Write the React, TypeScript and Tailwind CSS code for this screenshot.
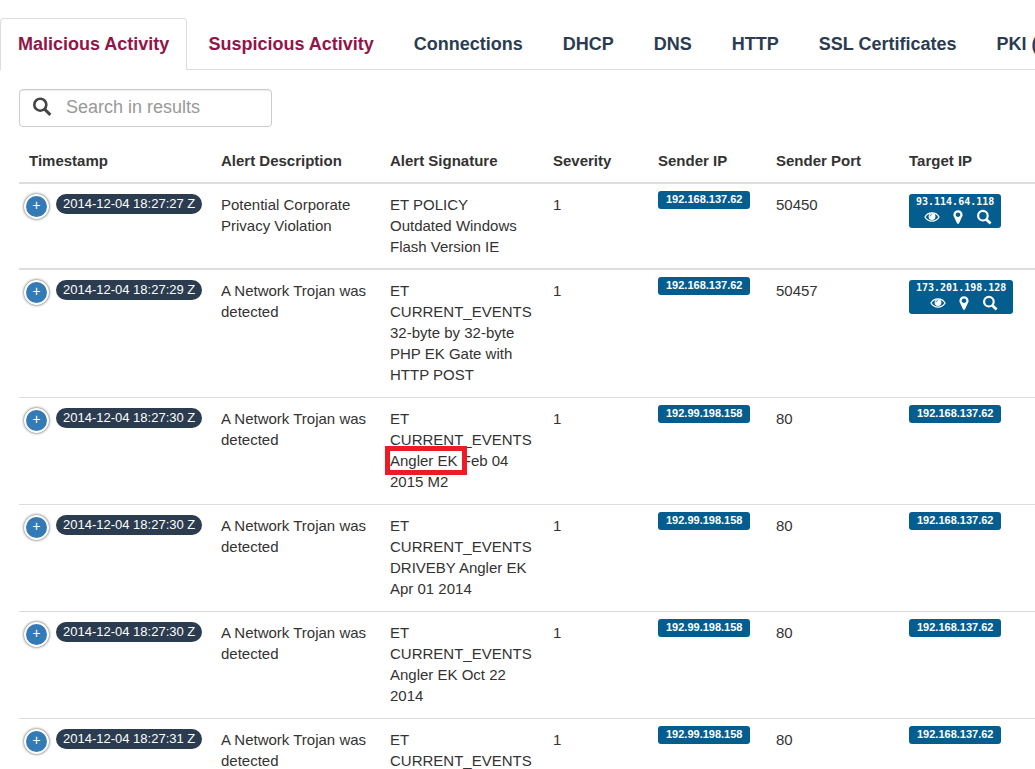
import React from "react";

type Alert = {
  time: string;
  description: string;
  signature: React.ReactNode;
  sender: string;
  port: string;
  target: string;
  external?: boolean;
};

const tabs = [
  { label: "Malicious Activity", alert: true, active: true },
  { label: "Suspicious Activity", alert: true },
  { label: "Connections" },
  { label: "DHCP" },
  { label: "DNS" },
  { label: "HTTP" },
  { label: "SSL Certificates" },
  { label: "PKI (" },
];

const alerts: Alert[] = [
  {
    time: "2014-12-04 18:27:27 Z",
    description: "Potential Corporate Privacy Violation",
    signature: "ET POLICY Outdated Windows Flash Version IE",
    sender: "192.168.137.62",
    port: "50450",
    target: "93.114.64.118",
    external: true,
  },
  {
    time: "2014-12-04 18:27:29 Z",
    description: "A Network Trojan was detected",
    signature: "ET CURRENT_EVENTS 32-byte by 32-byte PHP EK Gate with HTTP POST",
    sender: "192.168.137.62",
    port: "50457",
    target: "173.201.198.128",
    external: true,
  },
  {
    time: "2014-12-04 18:27:30 Z",
    description: "A Network Trojan was detected",
    signature: (
      <>
        ET CURRENT_EVENTS <Marked>Angler EK</Marked> Feb 04 2015 M2
      </>
    ),
    sender: "192.99.198.158",
    port: "80",
    target: "192.168.137.62",
  },
  {
    time: "2014-12-04 18:27:30 Z",
    description: "A Network Trojan was detected",
    signature: "ET CURRENT_EVENTS DRIVEBY Angler EK Apr 01 2014",
    sender: "192.99.198.158",
    port: "80",
    target: "192.168.137.62",
  },
  {
    time: "2014-12-04 18:27:30 Z",
    description: "A Network Trojan was detected",
    signature: "ET CURRENT_EVENTS Angler EK Oct 22 2014",
    sender: "192.99.198.158",
    port: "80",
    target: "192.168.137.62",
  },
  {
    time: "2014-12-04 18:27:31 Z",
    description: "A Network Trojan was detected",
    signature: "ET CURRENT_EVENTS",
    sender: "192.99.198.158",
    port: "80",
    target: "192.168.137.62",
  },
];

const headings = [
  "Timestamp",
  "Alert Description",
  "Alert Signature",
  "Severity",
  "Sender IP",
  "Sender Port",
  "Target IP",
];

function Marked({ children }: { children: React.ReactNode }) {
  return (
    <span className="relative whitespace-nowrap">
      {children}
      <span className="pointer-events-none absolute -inset-y-1.5 -left-[5px] -right-[9px] border-5 border-[#ed1c24]" />
    </span>
  );
}

function EyeIcon() {
  return (
    <svg viewBox="0 0 16 16" className="size-4 fill-none stroke-white" aria-hidden="true">
      <path
        d="M1 8C2.6 5.2 5 3.9 8 3.9S13.4 5.2 15 8C13.4 10.8 11 12.1 8 12.1S2.6 10.8 1 8Z"
        strokeWidth="1.3"
      />
      <circle cx="8" cy="7.6" r="3.4" className="fill-white stroke-none" />
      <path d="M5.9 7.4C6 6.3 6.7 5.7 7.7 5.6" className="stroke-[#045d8f]" strokeWidth="0.8" />
    </svg>
  );
}

function MarkerIcon() {
  return (
    <svg viewBox="0 0 1792 1792" className="size-4 fill-white" aria-hidden="true">
      <path d="M1152 640q0-106-75-181t-181-75-181 75-75 181 75 181 181 75 181-75 75-181zm256 0q0 109-33 179l-364 774q-16 33-47.5 52t-67.5 19-67.5-19-46.5-52l-365-774q-33-70-33-179 0-212 150-362t362-150 362 150 150 362z" />
    </svg>
  );
}

function MagnifierIcon() {
  return (
    <svg viewBox="0 0 16 16" className="size-4 fill-none stroke-white" aria-hidden="true">
      <circle cx="6.9" cy="6.7" r="4.8" strokeWidth="2.2" />
      <path d="M10.4 10.4 14.6 14.4" strokeWidth="2.8" />
    </svg>
  );
}

function IpLabel({ ip }: { ip: string }) {
  return (
    <span className="block h-[18px] w-fit rounded-[3px] bg-[#045d8f] px-2 text-[11px] leading-4 font-bold whitespace-nowrap text-white">
      {ip}
    </span>
  );
}

function ExternalIp({ ip }: { ip: string }) {
  return (
    <div className="flex w-fit flex-col items-center rounded-[3px] bg-[#045d8f] px-[7px] pb-[3px] text-white">
      <span className="font-['DejaVu_Sans_Mono',monospace] text-[10px] leading-[15px] font-bold whitespace-nowrap">
        {ip}
      </span>
      <div className="flex gap-2.5 pl-1.5">
        <button type="button" aria-label="Watch">
          <EyeIcon />
        </button>
        <button type="button" aria-label="Locate">
          <MarkerIcon />
        </button>
        <button type="button" aria-label="Search">
          <MagnifierIcon />
        </button>
      </div>
    </div>
  );
}

export default function App() {
  return (
    <div className="h-screen overflow-hidden bg-white pt-[18px] font-['Liberation_Sans',Arial,sans-serif] text-[15px] leading-[21px] text-[#333]">
      <nav className="flex h-[52px] gap-0.5 border-b border-[#ddd]">
        {tabs.map((t) => (
          <a
            key={t.label}
            href="#"
            className={
              "h-[52px] shrink-0 rounded-t border border-b-0 pt-3 text-lg leading-[26px] font-bold whitespace-nowrap " +
              (t.active ? "border-[#ddd] bg-white px-[17px] " : "border-transparent px-[18px] ") +
              (t.alert ? "text-[#8f1648]" : "text-[#2b3c50]")
            }
          >
            {t.label}
          </a>
        ))}
      </nav>

      <main className="pl-[19px]">
        <label className="mt-[19px] flex h-[38px] w-[253px] items-center rounded border border-[#ccc] pb-0.5 shadow-[inset_0_1px_1px_rgba(0,0,0,0.075)]">
          <svg
            viewBox="0 0 20 20"
            className="ml-3 size-5 shrink-0 fill-none stroke-[#444]"
            aria-hidden="true"
          >
            <circle cx="8.3" cy="7.7" r="6" strokeWidth="2.6" />
            <path d="M12.5 12.2 18.4 17.8" strokeWidth="3" />
          </svg>
          <input
            type="search"
            aria-label="Search in results"
            placeholder="Search in results"
            className="ml-3.5 min-w-0 flex-1 bg-transparent text-lg leading-6 outline-none placeholder:text-[#999]"
          />
        </label>

        <table className="mt-[13px] w-full table-fixed border-separate border-spacing-0 text-left">
          <colgroup>
            <col className="w-[192px]" />
            <col className="w-[169px]" />
            <col className="w-[163px]" />
            <col className="w-[105px]" />
            <col className="w-[118px]" />
            <col className="w-[133px]" />
            <col />
          </colgroup>
          <thead>
            <tr>
              {headings.map((h) => (
                <th
                  key={h}
                  scope="col"
                  className="h-[42px] px-2.5 pb-0.5 font-bold whitespace-nowrap"
                >
                  {h}
                </th>
              ))}
            </tr>
          </thead>
          <tbody className="[&_td]:border-t [&_td]:border-[#ddd] [&_td]:align-top [&>tr:nth-child(-n+2)>td]:border-t-2 [&_td]:pb-3 [&>tr:first-child>td]:pb-[11px]">
            {alerts.map((a, i) => (
              <tr key={i}>
                <td className="pt-2.5 pl-[5px]">
                  <div className="flex">
                    <button
                      type="button"
                      aria-label="Show details"
                      className="flex size-[25px] shrink-0 items-center justify-center rounded-full border-2 border-white bg-[#337ab7] pb-0.5 font-['Liberation_Mono',monospace] text-sm leading-none text-white shadow-[0_0_3px_#444]"
                    >
                      +
                    </button>
                    <span className="ml-[7px] h-5 rounded-full bg-[#2b3c50] px-[7px] text-[13px] leading-[19px] whitespace-nowrap text-white">
                      {a.time}
                    </span>
                  </div>
                </td>
                <td className="px-2.5 pt-2.5">{a.description}</td>
                <td className="px-2.5 pt-2.5">{a.signature}</td>
                <td className="px-2.5 pt-2.5">1</td>
                <td className="px-2.5 pt-[7px]">
                  <IpLabel ip={a.sender} />
                </td>
                <td className="px-2.5 pt-2.5">{a.port}</td>
                <td className={a.external ? "px-2.5 pt-2.5" : "px-2.5 pt-[7px]"}>
                  {a.external ? <ExternalIp ip={a.target} /> : <IpLabel ip={a.target} />}
                </td>
              </tr>
            ))}
          </tbody>
        </table>
      </main>
    </div>
  );
}
